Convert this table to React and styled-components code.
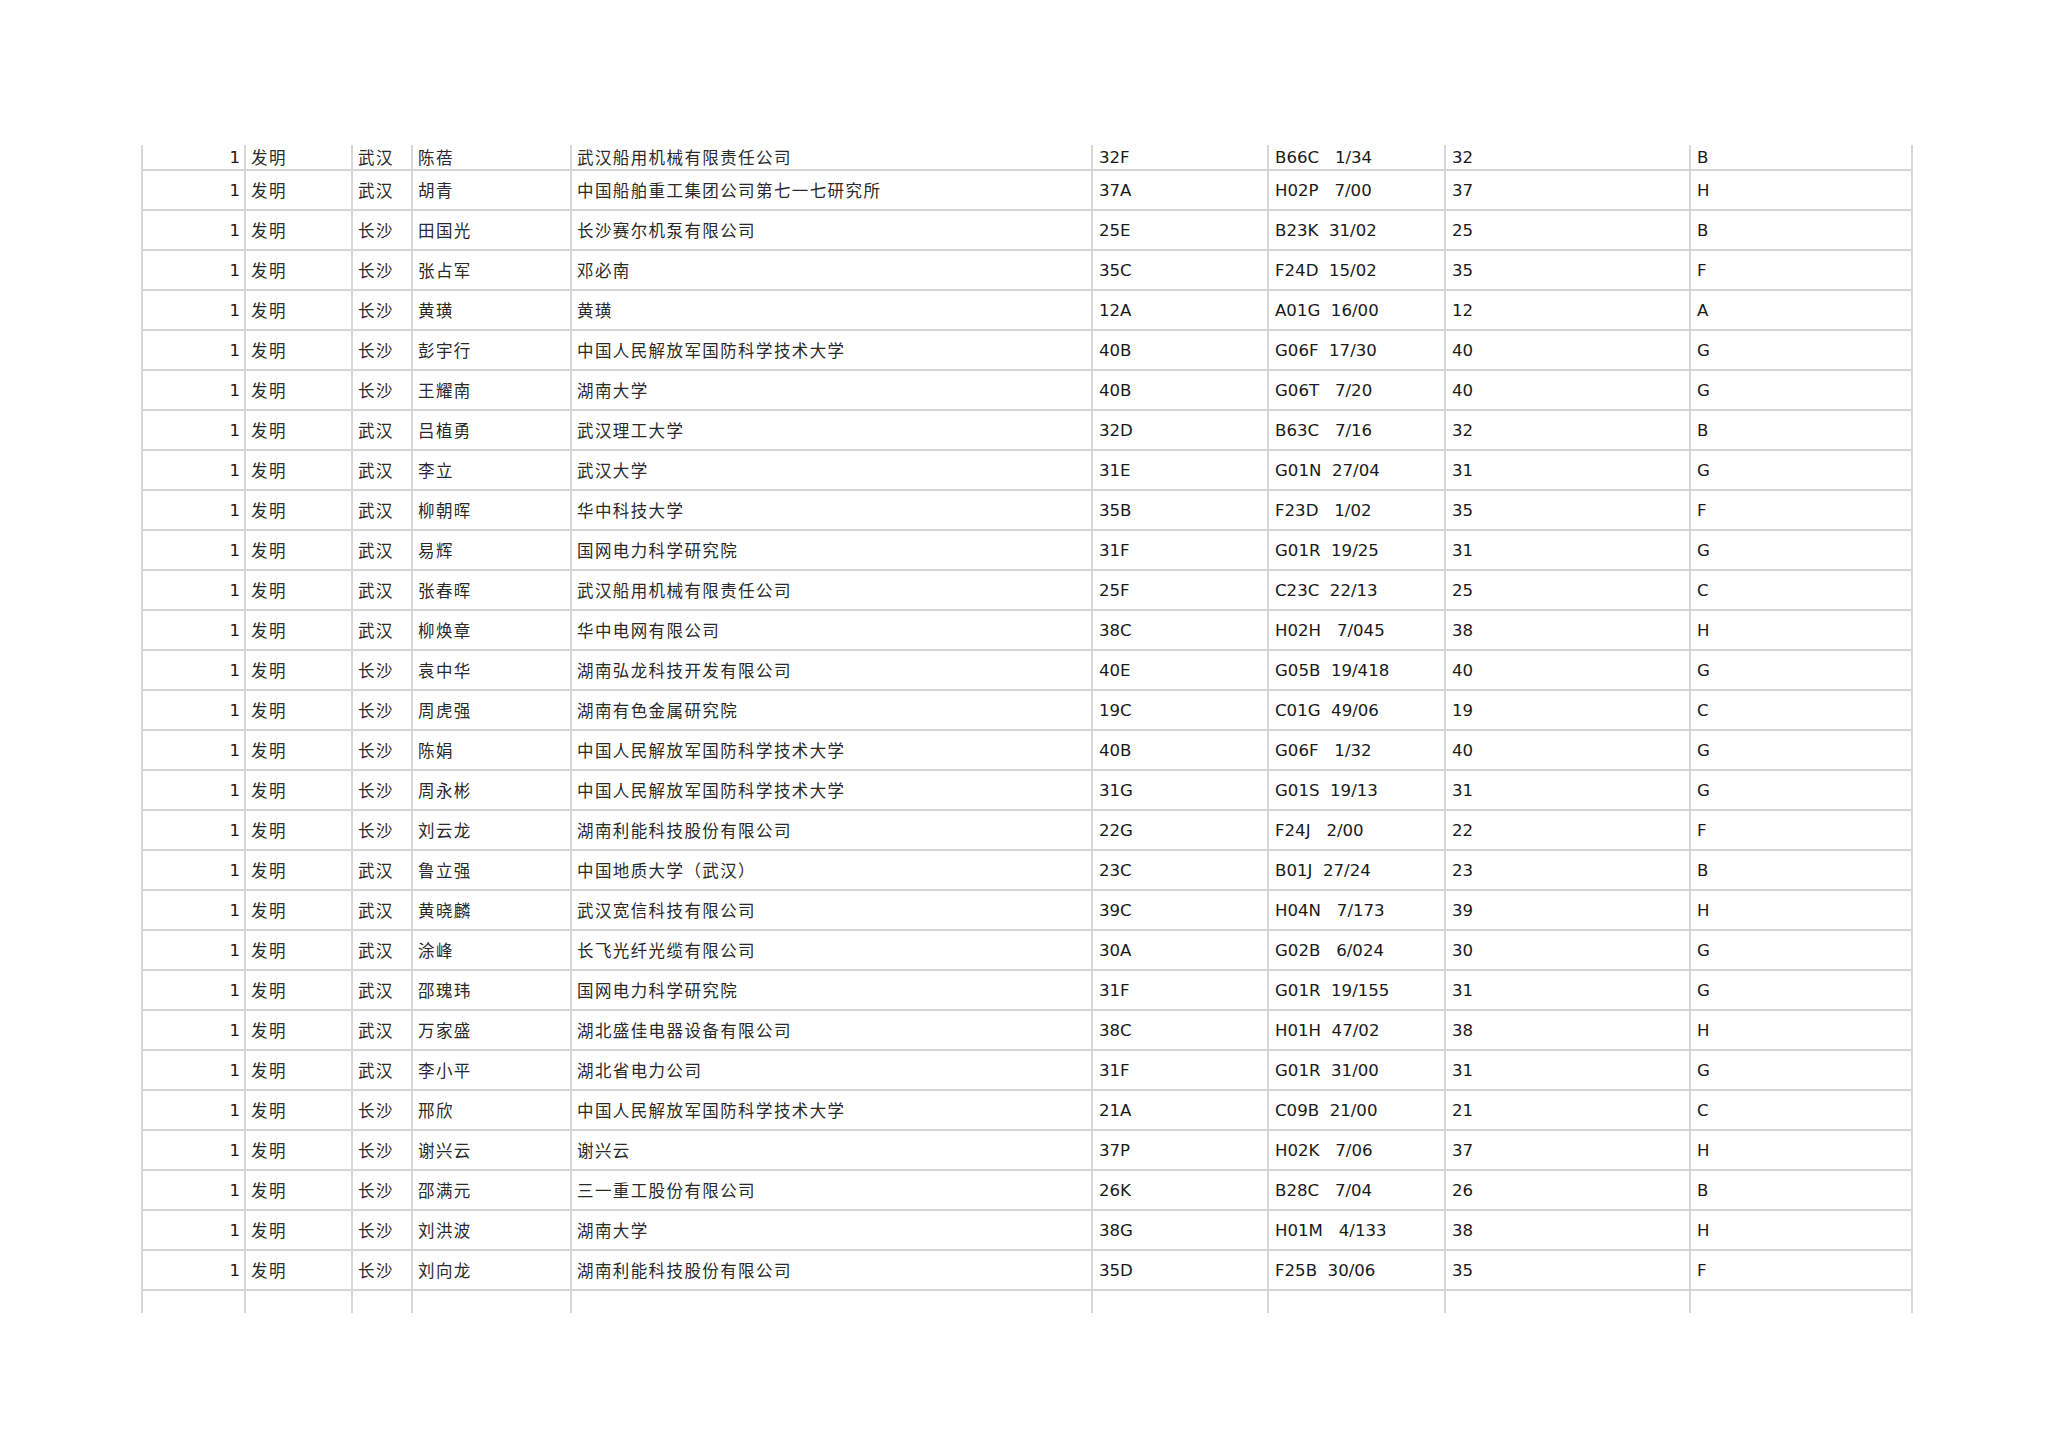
import styled, { createGlobalStyle } from 'styled-components';

const GlobalStyle = createGlobalStyle`
  html, body {
    margin: 0;
    padding: 0;
    background: #ffffff;
  }
  body {
    font-family: "DejaVu Sans", "Noto Sans CJK SC", sans-serif;
    color: #1c1c1c;
  }
`;

const line = '#d6d6d6';
const columns = '105px 107px 60px 159px 521px 176px 177px 245px 222px';

const rows = [
  ['武汉', '陈蓓', '武汉船用机械有限责任公司', '32F', 'B66C   1/34', '32', 'B'],
  ['武汉', '胡青', '中国船舶重工集团公司第七一七研究所', '37A', 'H02P   7/00', '37', 'H'],
  ['长沙', '田国光', '长沙赛尔机泵有限公司', '25E', 'B23K  31/02', '25', 'B'],
  ['长沙', '张占军', '邓必南', '35C', 'F24D  15/02', '35', 'F'],
  ['长沙', '黄璜', '黄璜', '12A', 'A01G  16/00', '12', 'A'],
  ['长沙', '彭宇行', '中国人民解放军国防科学技术大学', '40B', 'G06F  17/30', '40', 'G'],
  ['长沙', '王耀南', '湖南大学', '40B', 'G06T   7/20', '40', 'G'],
  ['武汉', '吕植勇', '武汉理工大学', '32D', 'B63C   7/16', '32', 'B'],
  ['武汉', '李立', '武汉大学', '31E', 'G01N  27/04', '31', 'G'],
  ['武汉', '柳朝晖', '华中科技大学', '35B', 'F23D   1/02', '35', 'F'],
  ['武汉', '易辉', '国网电力科学研究院', '31F', 'G01R  19/25', '31', 'G'],
  ['武汉', '张春晖', '武汉船用机械有限责任公司', '25F', 'C23C  22/13', '25', 'C'],
  ['武汉', '柳焕章', '华中电网有限公司', '38C', 'H02H   7/045', '38', 'H'],
  ['长沙', '袁中华', '湖南弘龙科技开发有限公司', '40E', 'G05B  19/418', '40', 'G'],
  ['长沙', '周虎强', '湖南有色金属研究院', '19C', 'C01G  49/06', '19', 'C'],
  ['长沙', '陈娟', '中国人民解放军国防科学技术大学', '40B', 'G06F   1/32', '40', 'G'],
  ['长沙', '周永彬', '中国人民解放军国防科学技术大学', '31G', 'G01S  19/13', '31', 'G'],
  ['长沙', '刘云龙', '湖南利能科技股份有限公司', '22G', 'F24J   2/00', '22', 'F'],
  ['武汉', '鲁立强', '中国地质大学（武汉）', '23C', 'B01J  27/24', '23', 'B'],
  ['武汉', '黄晓麟', '武汉宽信科技有限公司', '39C', 'H04N   7/173', '39', 'H'],
  ['武汉', '涂峰', '长飞光纤光缆有限公司', '30A', 'G02B   6/024', '30', 'G'],
  ['武汉', '邵瑰玮', '国网电力科学研究院', '31F', 'G01R  19/155', '31', 'G'],
  ['武汉', '万家盛', '湖北盛佳电器设备有限公司', '38C', 'H01H  47/02', '38', 'H'],
  ['武汉', '李小平', '湖北省电力公司', '31F', 'G01R  31/00', '31', 'G'],
  ['长沙', '邢欣', '中国人民解放军国防科学技术大学', '21A', 'C09B  21/00', '21', 'C'],
  ['长沙', '谢兴云', '谢兴云', '37P', 'H02K   7/06', '37', 'H'],
  ['长沙', '邵满元', '三一重工股份有限公司', '26K', 'B28C   7/04', '26', 'B'],
  ['长沙', '刘洪波', '湖南大学', '38G', 'H01M   4/133', '38', 'H'],
  ['长沙', '刘向龙', '湖南利能科技股份有限公司', '35D', 'F25B  30/06', '35', 'F'],
];

const Page = styled.div`
  width: 2048px;
  height: 1447px;
  box-sizing: border-box;
  padding: 145px 0 0 141px;
  background: #ffffff;
  overflow: hidden;
`;

const Sheet = styled.div`
  display: flex;
  flex-direction: column;
  width: 1772px;
`;

const Row = styled.div`
  display: grid;
  grid-template-columns: ${columns};
  height: ${(p) => p.$h}px;
`;

const Cell = styled.div`
  display: flex;
  align-items: center;
  justify-content: ${(p) => (p.$right ? 'flex-end' : 'flex-start')};
  box-sizing: border-box;
  padding: ${(p) => (p.$cjk ? '0 0 0 5px' : '3px 0 0 6px')};
  padding-right: ${(p) => (p.$right ? '4px' : '0')};
  border-right: 2px solid ${line};
  border-bottom: ${(p) => (p.$open ? 'none' : `2px solid ${line}`)};
  &:first-child {
    border-left: 2px solid ${line};
  }
  white-space: pre;
  overflow: hidden;
  font-family: ${(p) => (p.$cjk
    ? '"Noto Sans CJK SC", "DejaVu Sans", sans-serif'
    : '"DejaVu Sans", "Noto Sans CJK SC", sans-serif')};
  font-size: ${(p) => (p.$cjk ? '16.5px' : '16.6px')};
  letter-spacing: ${(p) => (p.$cjk ? '1.4px' : '0')};
  color: ${(p) => (p.$cjk ? '#2a2a2a' : '#1a1a1a')};
  line-height: 1;
`;

function DataRow({ data, h }) {
  const [city, name, org, code, ipc, num, sect] = data;
  return (
    <Row $h={h}>
      <Cell $right>1</Cell>
      <Cell $cjk>发明</Cell>
      <Cell $cjk>{city}</Cell>
      <Cell $cjk>{name}</Cell>
      <Cell $cjk>{org}</Cell>
      <Cell>{code}</Cell>
      <Cell>{ipc}</Cell>
      <Cell>{num}</Cell>
      <Cell>{sect}</Cell>
    </Row>
  );
}

export default function App() {
  return (
    <Page>
      <GlobalStyle />
      <Sheet>
        {rows.map((r, i) => (
          <DataRow key={i} data={r} h={i === 0 ? 26 : 40} />
        ))}
        <Row $h={22}>
          {Array.from({ length: 9 }).map((_, i) => (
            <Cell key={i} $open />
          ))}
        </Row>
      </Sheet>
    </Page>
  );
}
